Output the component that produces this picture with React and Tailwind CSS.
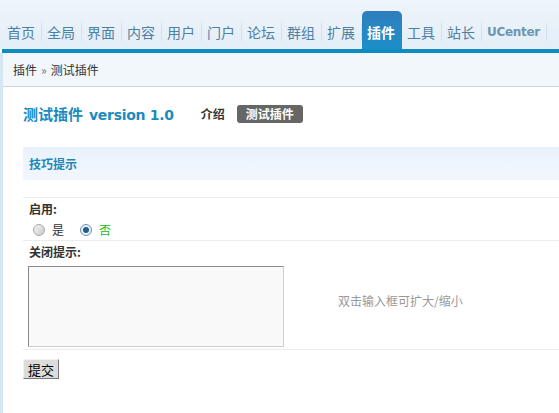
export default function App() {
  const items = ["首页", "全局", "界面", "内容", "用户", "门户", "论坛", "群组", "扩展", "插件", "工具", "站长"];
  const cjk = "font-['Noto_Sans_CJK_SC',sans-serif]";
  return (
    <div className={`w-[559px] h-[413px] overflow-hidden bg-white text-[12px] text-[#333] ${cjk}`}>
      {/* header */}
      <div className="h-[49px] bg-gradient-to-b from-[#eef5fb] to-[#e4eef7] flex items-end pl-[2px]">
        {items.map((t) => {
          const active = t === "插件";
          return active ? (
            <div key={t} className="h-[38px] pl-[5px] pr-[7px] flex items-center rounded-t-[5px] bg-gradient-to-b from-[#2f7dbe] to-[#1b8fc9] text-white font-bold text-[14px] leading-none">
              <span className="pt-[4px]">{t}</span>
            </div>
          ) : (
            <div key={t} className="h-[38px] pl-[5px] flex items-center text-[14px] leading-none text-[#4f7fa3]">
              <span className="pt-[4px]">{t}</span>
              <span className="ml-[6px] mt-[4px] w-px h-[18px] bg-[#d2e1ec]"></span>
            </div>
          );
        })}
        <div className="h-[38px] pl-[5px] flex items-center text-[12px] leading-none font-bold text-[#6f95b2] font-['DejaVu_Sans',sans-serif]">
          <span className="pt-[4px] tracking-[-0.3px]">UCenter</span>
          <span className="ml-[6px] mt-[4px] w-px h-[18px] bg-[#d2e1ec]"></span>
        </div>
      </div>
      <div className="ml-[2px] h-[4px] bg-[#0e8cbf]"></div>

      {/* body */}
      <div className="border-l-[3px] border-[#d5e7f3] h-[360px]">
        <div className="h-[34px] bg-[#f2f7fb] border-b border-[#c8d7e2] flex items-center pl-[10px] text-[12px] text-[#333]">
          插件 <span className="mx-[4px] text-[#777]">»</span> 测试插件
        </div>

        <div className="pl-[20px]">
          <div className="mt-[18px] h-[18px] flex items-center">
            <span className="text-[15px] font-bold text-[#1b8bbf] leading-none whitespace-nowrap">
              测试插件<span className="ml-[6px] font-['DejaVu_Sans',sans-serif] text-[14px] tracking-[-0.3px]">version 1.0</span>
            </span>
            <span className="ml-[27px] font-bold text-[12px] text-[#333]">介绍</span>
            <span className="ml-[12px] h-[18px] px-[9px] flex items-center rounded-[3px] bg-[#666] text-white font-bold text-[12px]">测试插件</span>
          </div>

          <div className="mt-[24px] h-[33px] bg-gradient-to-b from-[#e9f2fc] to-[#f2f7fd] flex items-center pl-[6px] font-bold text-[12px] text-[#1c88b8]">
            技巧提示
          </div>

          <div className="h-[17px]"></div>
          <div className="border-t border-[#ececec] h-[22px] flex items-center pl-[6px] font-bold text-[#333]">启用:</div>
          <div className="h-[21px] flex items-center pl-[10px]">
            <span className="w-[12px] h-[12px] rounded-full border border-[#a9a9a9] bg-gradient-to-br from-[#f4f4f4] to-[#c9c9c9]"></span>
            <span className="ml-[7px] text-[#333]">是</span>
            <span className="ml-[16px] w-[12px] h-[12px] rounded-full border border-[#6f8fab] bg-[#eef3f8] flex items-center justify-center">
              <span className="w-[6px] h-[6px] rounded-full bg-[#1f5e8e]"></span>
            </span>
            <span className="ml-[7px] text-[#22bb22]">否</span>
          </div>
          <div className="border-t border-[#ececec] h-[22px] flex items-center pl-[6px] font-bold text-[#333]">关闭提示:</div>
          <div className="h-[87px] flex items-start pt-[4px] pl-[5px]">
            <div className="w-[256px] h-[81px] bg-[#f9f9f9] border border-t-[#8a8a8a] border-l-[#8a8a8a] border-r-[#cfcfcf] border-b-[#cfcfcf]"></div>
            <div className="ml-[54px] mt-[26px] text-[12px] text-[#999]">双击输入框可扩大/缩小</div>
          </div>
          <div className="border-t border-[#ececec]"></div>
          <div className="mt-[9px]">
            <button className="w-[36px] h-[20px] bg-[#dcdcdc] border border-t-[#f2f2f2] border-l-[#f2f2f2] border-r-[#777] border-b-[#777] text-[13px] text-black leading-none flex items-center justify-center">提交</button>
          </div>
        </div>
      </div>
    </div>
  );
}
